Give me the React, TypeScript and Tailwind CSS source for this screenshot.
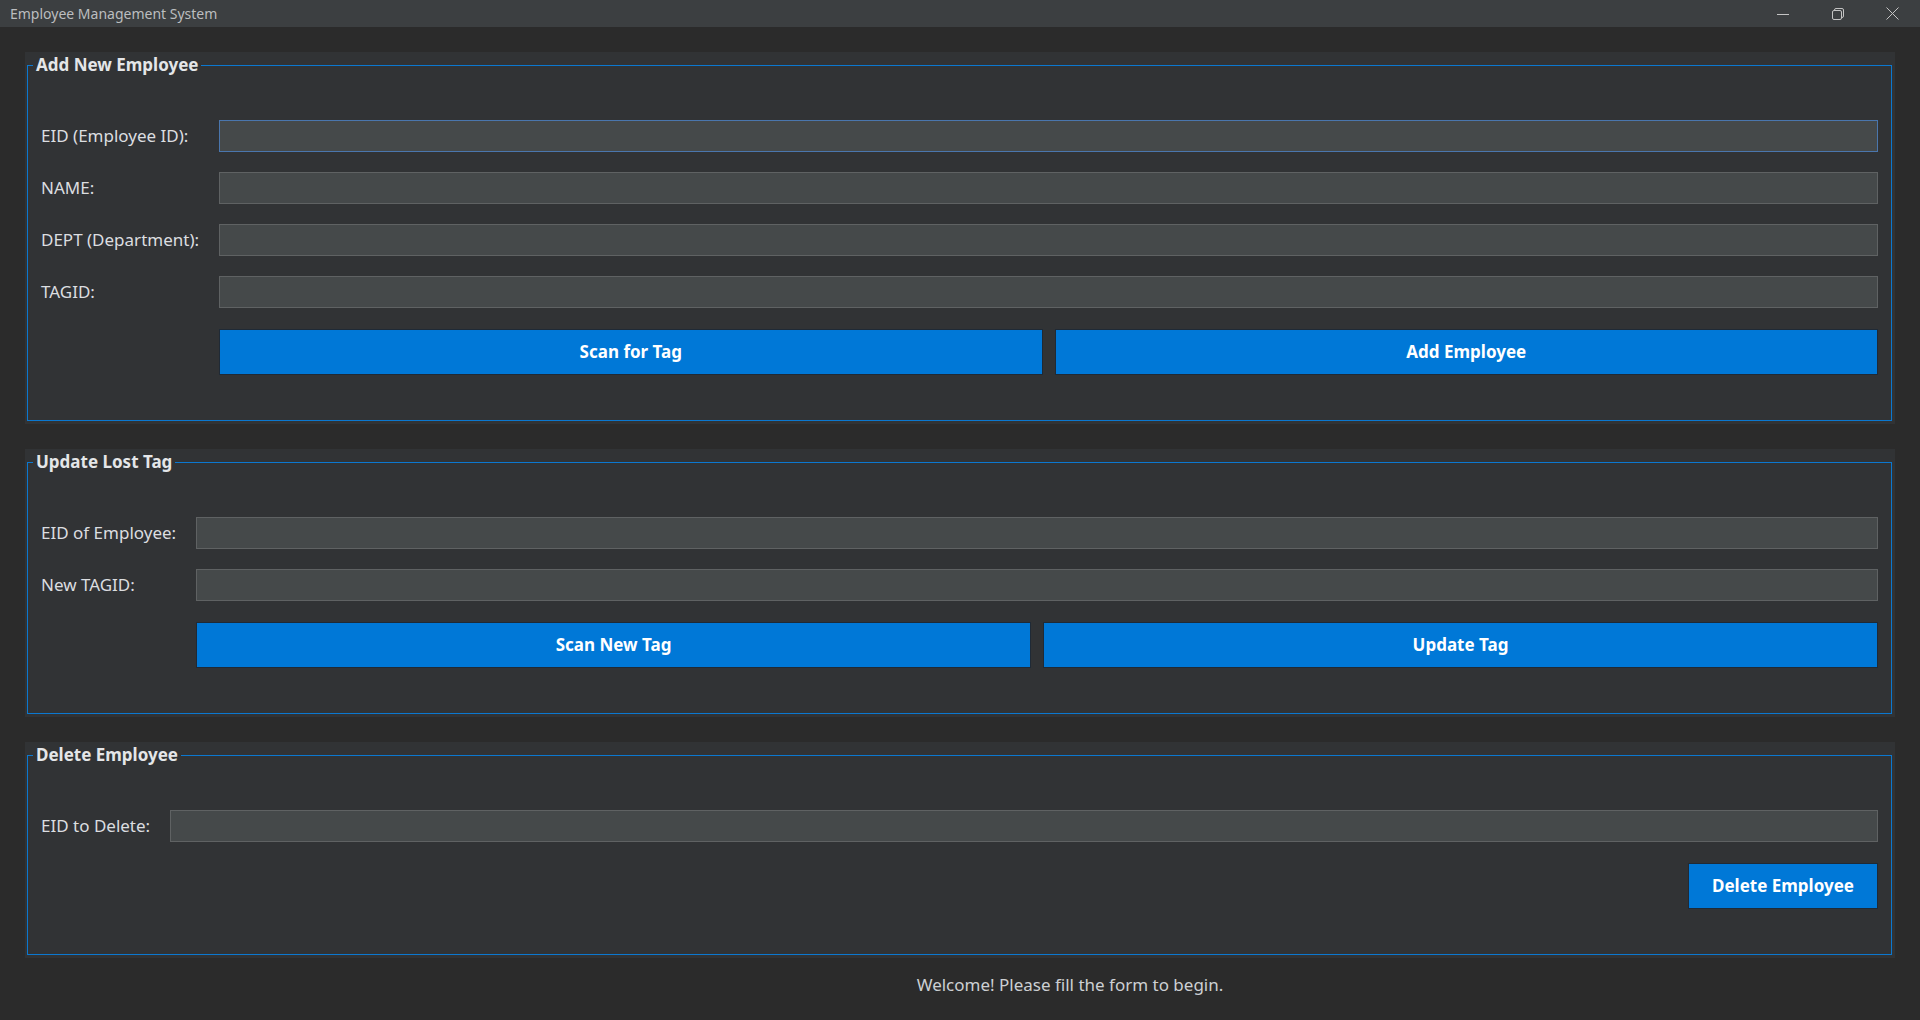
import { FC } from "react";

const TitleBar: FC = () => {
  return (
    <div className="h-[27px] bg-[#3c3f41] flex items-center justify-between shrink-0">
      <p className="pl-[10px] text-[14px] text-[#bbbdbf]">Employee Management System</p>
      <div className="flex h-full">
        <div className="w-[55px] h-full flex items-center justify-center">
          <svg width="12" height="12" viewBox="0 0 12 12">
            <path d="M0 6.5h12" stroke="#c4c4c4" strokeWidth="1" />
          </svg>
        </div>
        <div className="w-[55px] h-full flex items-center justify-center">
          <svg width="12" height="12" viewBox="0 0 12 12" fill="none">
            <rect x="0.5" y="2.5" width="9" height="9" rx="1.5" stroke="#c4c4c4" />
            <path d="M2.5 2.5V2a1.5 1.5 0 0 1 1.5-1.5h6A1.5 1.5 0 0 1 11.5 2v6a1.5 1.5 0 0 1-1.5 1.5h-.5" stroke="#c4c4c4" />
          </svg>
        </div>
        <div className="w-[55px] h-full flex items-center justify-center">
          <svg width="13" height="13" viewBox="0 0 13 13">
            <path d="M0.5 0.5l12 12M12.5 0.5l-12 12" stroke="#c4c4c4" strokeWidth="1" />
          </svg>
        </div>
      </div>
    </div>
  );
};

interface iField {
  label: string;
  focused?: boolean;
}

const Field: FC<iField> = ({ label, focused }) => {
  return (
    <>
      <label className="text-[17px] text-[#dcdee0] whitespace-nowrap leading-[22px]">{label}</label>
      <input
        type="text"
        className={
          focused
            ? "h-[32px] w-full bg-[#45494a] border border-[#4a76ad] outline-none"
            : "h-[32px] w-full bg-[#45494a] border border-[#5f6263] outline-none"
        }
      />
    </>
  );
};

const BlueButton: FC<{ text: string; className?: string }> = ({ text, className }) => {
  return (
    <button
      className={
        "h-[46px] bg-[#0078d7] border border-[#1f2a36] text-white text-[17px] font-bold " +
        (className ?? "")
      }
    >
      {text}
    </button>
  );
};

const Panel: FC<{ title: string; children: React.ReactNode }> = ({ title, children }) => {
  return (
    <div className="bg-[#313335] pt-[3px] pb-[3px] pl-[2px] pr-[3px]">
      <fieldset className="border border-[#0b78d0] min-w-0">
        <legend className="ml-[5px] px-[3px] text-[17px] font-bold leading-[20px] text-[#e4e6e8]">
          {title}
        </legend>
        <div className="grid grid-cols-[auto_1fr] gap-x-[20px] gap-y-[20px] items-center px-[13px] pt-[45px] pb-[45px]">
          {children}
        </div>
      </fieldset>
    </div>
  );
};

const App: FC = () => {
  return (
    <div className="w-full h-screen bg-[#2b2b2b] flex flex-col font-['Noto_Sans',sans-serif] overflow-hidden">
      <TitleBar />
      <div className="flex flex-col gap-[25px] px-[25px] pt-[25px]">
        <Panel title="Add New Employee">
          <Field label="EID (Employee ID):" focused />
          <Field label="NAME:" />
          <Field label="DEPT (Department):" />
          <Field label="TAGID:" />
          <div className="col-start-2 grid grid-cols-2 gap-[12px] mt-[1px]">
            <BlueButton text="Scan for Tag" />
            <BlueButton text="Add Employee" />
          </div>
        </Panel>

        <Panel title="Update Lost Tag">
          <Field label="EID of Employee:" />
          <Field label="New TAGID:" />
          <div className="col-start-2 grid grid-cols-2 gap-[12px] mt-[1px]">
            <BlueButton text="Scan New Tag" />
            <BlueButton text="Update Tag" />
          </div>
        </Panel>

        <Panel title="Delete Employee">
          <Field label="EID to Delete:" />
          <div className="col-start-2 flex justify-end mt-[1px]">
            <BlueButton text="Delete Employee" className="w-[190px]" />
          </div>
        </Panel>
      </div>
      <div className="flex justify-center pl-[220px] pt-[16px]">
        <p className="text-[17px] leading-[22px] text-[#cdd0d3]">Welcome! Please fill the form to begin.</p>
      </div>
    </div>
  );
};

export default App;
